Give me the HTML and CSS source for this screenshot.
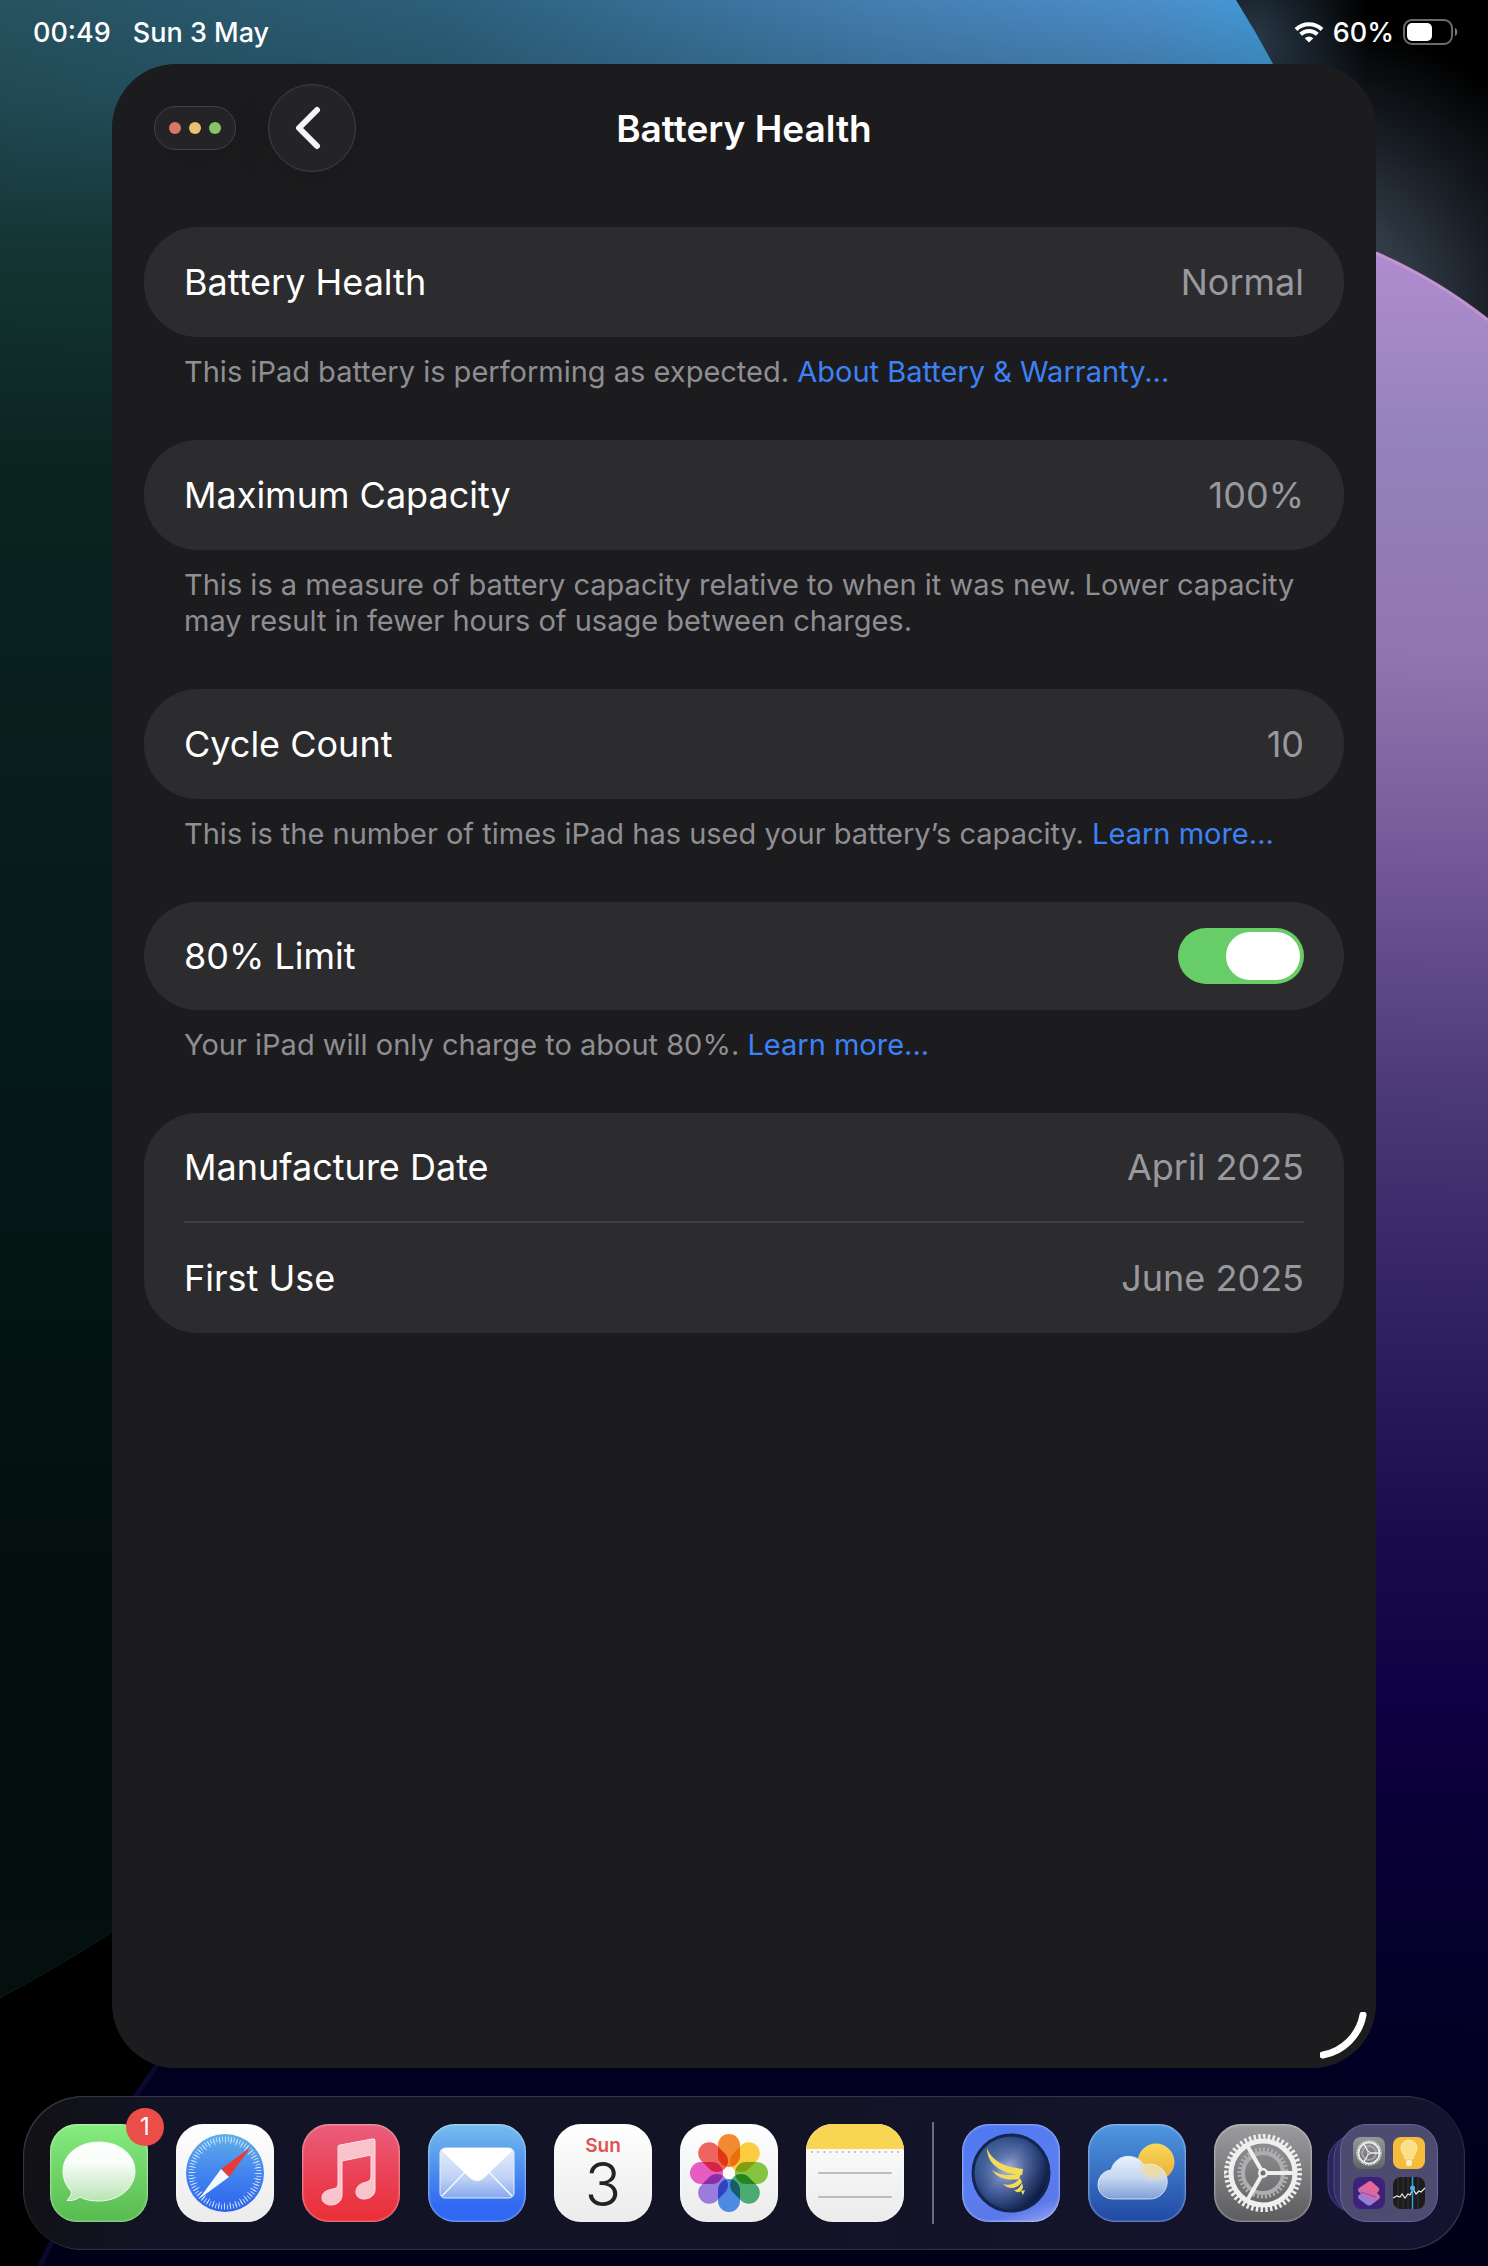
FILE: index.html
```
<!DOCTYPE html>
<html lang="en">
<head>
  <meta charset="UTF-8" />
  <meta name="viewport" content="width=device-width, initial-scale=1.0" />
  <title>Battery Health</title>
  <link rel="stylesheet" href="styles.css">
</head>
<body>
  <!-- Wallpaper -->
  <svg class="wallpaper" viewBox="0 0 1488 2266" preserveAspectRatio="none" aria-hidden="true">
    <defs>
      <linearGradient id="skyAcross" gradientUnits="userSpaceOnUse" x1="0" y1="0" x2="1270" y2="0">
        <stop offset="0" stop-color="#27525f" />
        <stop offset="0.35" stop-color="#2c5f7b" />
        <stop offset="0.7" stop-color="#447fb2" />
        <stop offset="0.9" stop-color="#4c8cc8" />
        <stop offset="1" stop-color="#439ad9" />
      </linearGradient>
      <linearGradient id="skyDown" x1="0" y1="0" x2="0" y2="1">
        <stop offset="0" stop-color="#123436" stop-opacity="0" />
        <stop offset="0.05" stop-color="#123436" stop-opacity="0.3" />
        <stop offset="0.12" stop-color="#12322f" stop-opacity="0.9" />
        <stop offset="0.23" stop-color="#0b2420" />
        <stop offset="0.5" stop-color="#051a19" />
        <stop offset="0.8" stop-color="#030f0e" />
        <stop offset="1" stop-color="#03100e" />
      </linearGradient>
      <radialGradient id="slateGlow" gradientUnits="userSpaceOnUse" cx="1300" cy="320" r="300">
        <stop offset="0" stop-color="#3c4654" />
        <stop offset="0.35" stop-color="#333d49" />
        <stop offset="0.65" stop-color="#191f26" />
        <stop offset="1" stop-color="#000000" />
      </radialGradient>
      <radialGradient id="topGlow" gradientUnits="userSpaceOnUse" cx="1250" cy="40" r="120">
        <stop offset="0" stop-color="#2a3a4a" />
        <stop offset="1" stop-color="#2a3a4a" stop-opacity="0" />
      </radialGradient>
      <linearGradient id="planet" gradientUnits="userSpaceOnUse" x1="1420" y1="250" x2="1400" y2="2266">
        <stop offset="0" stop-color="#b08ccf" />
        <stop offset="0.09" stop-color="#9583bd" />
        <stop offset="0.2" stop-color="#9175ae" />
        <stop offset="0.3" stop-color="#74599a" />
        <stop offset="0.42" stop-color="#4b3877" />
        <stop offset="0.53" stop-color="#302160" />
        <stop offset="0.64" stop-color="#1a0c4c" />
        <stop offset="0.72" stop-color="#0e0042" />
        <stop offset="0.82" stop-color="#070030" />
        <stop offset="0.92" stop-color="#01001f" />
        <stop offset="1" stop-color="#000016" />
      </linearGradient>
    </defs>
    <rect width="1488" height="2266" fill="#000" />
    <rect x="1000" width="488" height="700" fill="url(#slateGlow)" />
    <circle cx="1250" cy="40" r="120" fill="url(#topGlow)" />
    <path d="M0 0H1236Q1256 32 1273 64C1600 700 600 1680 112 1932Q60 1966 0 1998Z" fill="url(#skyAcross)" />
    <path d="M0 0H1236Q1256 32 1273 64C1600 700 600 1680 112 1932Q60 1966 0 1998Z" fill="url(#skyDown)" />
    <path d="M40 2266Q90 2160 158 2064C500 1500 900 300 1376 252Q1436 278 1488 319V2266Z" fill="url(#planet)" />
    <path d="M1376 253Q1436 279 1488 320" fill="none" stroke="#cb99d2" stroke-width="3" opacity="0.8" />
    <path d="M40 2266Q90 2160 158 2064" fill="none" stroke="#0c0830" stroke-width="5" />
  </svg>

  <div class="screen">
    <!-- Status bar -->
    <header class="statusBar">
      <div class="statusGroup dateGroup">
        <span>00:49</span>
        <span>Sun 3 May</span>
      </div>
      <div class="statusGroup">
        <svg width="30" height="22" viewBox="0 0 30 22" aria-label="Wi-Fi">
          <g fill="none" stroke="#fff" stroke-width="4">
            <path d="M2 8.500a19 19 0 0 1 26 0" />
            <path d="M6.600 13.200a12.400 12.400 0 0 1 16.800 0" />
          </g>
          <path d="M15 21.500l-4.300-4.300a6.200 6.200 0 0 1 8.600 0z" fill="#fff" />
        </svg>
        <span>60%</span>
        <svg width="56" height="26" viewBox="0 0 56 26" aria-label="Battery">
          <rect x="1" y="1" width="48" height="24" rx="8" fill="none" stroke="#6c6c70" stroke-width="2" />
          <rect x="4" y="4" width="25" height="18" rx="5" fill="#fff" />
          <path d="M52 9c3 1 3 7 0 8z" fill="#7c7c80" />
        </svg>
      </div>
    </header>

    <!-- Settings window -->
    <main class="window">
      <div class="titleBar">
        <div class="titleControls">
          <button class="trafficLights" aria-label="Window controls">
            <span class="light red"></span>
            <span class="light yellow"></span>
            <span class="light green"></span>
          </button>
          <button class="backButton" aria-label="Back">
            <svg width="26" height="44" viewBox="0 0 26 44">
              <path d="M22 4L4 22l18 18" fill="none" stroke="#f4f4f6" stroke-width="6" stroke-linecap="round" stroke-linejoin="round" />
            </svg>
          </button>
        </div>
        <h1>Battery Health</h1>
      </div>

      <div class="settings">
        <section>
          <div class="card">
            <div class="row"><span>Battery Health</span><span class="value">Normal</span></div>
          </div>
          <p class="note">This iPad battery is performing as expected. <a href="#">About Battery &amp; Warranty...</a></p>
        </section>

        <section>
          <div class="card">
            <div class="row"><span>Maximum Capacity</span><span class="value">100%</span></div>
          </div>
          <p class="note">This is a measure of battery capacity relative to when it was new. Lower capacity may result in fewer hours of usage between charges.</p>
        </section>

        <section>
          <div class="card">
            <div class="row"><span>Cycle Count</span><span class="value">10</span></div>
          </div>
          <p class="note">This is the number of times iPad has used your battery’s capacity. <a href="#">Learn more...</a></p>
        </section>

        <section>
          <div class="card">
            <div class="row toggleRow">
              <label for="limitToggle">80% Limit</label>
              <input type="checkbox" id="limitToggle" class="toggle" checked />
            </div>
          </div>
          <p class="note">Your iPad will only charge to about 80%. <a href="#">Learn more...</a></p>
        </section>

        <section>
          <div class="card">
            <div class="row"><span>Manufacture Date</span><span class="value">April 2025</span></div>
            <div class="row"><span>First Use</span><span class="value">June 2025</span></div>
          </div>
        </section>
      </div>

      <svg class="resizeHandle" width="48" height="48" viewBox="0 0 48 48" aria-hidden="true">
        <path d="M43 3A50 50 0 0 1 3 43" fill="none" stroke="#fff" stroke-width="7" stroke-linecap="round" />
      </svg>
    </main>

    <!-- Dock -->
    <nav class="dock" aria-label="Dock">
      <button class="app messages" aria-label="Messages">
        <svg viewBox="0 0 98 98">
          <defs>
            <linearGradient id="bubble" x1="0" y1="0" x2="0" y2="1">
              <stop offset="0" stop-color="#ffffff" />
              <stop offset="0.35" stop-color="#f8fdf8" />
              <stop offset="1" stop-color="#b9e3b5" />
            </linearGradient>
          </defs>
          <path d="M49 18C69 18 85 30 85 47S69 77 49 77C42 77 35 76 30 73C26 76 21 77 17 76.500C20 73 22 70 21 67C16 62 13 55 13 47C13 30 29 18 49 18Z" fill="url(#bubble)" stroke="#eefbec" stroke-width="1" />
        </svg>
        <span class="badge">1</span>
      </button>

      <button class="app safari" aria-label="Safari">
        <svg viewBox="0 0 98 98">
          <defs>
            <linearGradient id="compass" x1="0" y1="0" x2="0" y2="1">
              <stop offset="0" stop-color="#5fb0ea" />
              <stop offset="0.5" stop-color="#4485ee" />
              <stop offset="1" stop-color="#2c62ee" />
            </linearGradient>
          </defs>
          <circle cx="49" cy="49" r="39" fill="url(#compass)" />
          <circle cx="49" cy="49" r="34" fill="none" stroke="#cfe3fb" stroke-width="5" pathLength="72" stroke-dasharray="0.3 0.7" />
          <circle cx="49" cy="49" r="32.500" fill="none" stroke="#cfe3fb" stroke-width="6" pathLength="36" stroke-dasharray="0.150 0.850" />
          <path d="M75 23L53 53L45 45Z" fill="#e93b36" />
          <path d="M23 75L45 45L53 53Z" fill="#f4f8ff" />
        </svg>
      </button>

      <button class="app music" aria-label="Music">
        <svg viewBox="0 0 98 98">
          <path d="M36 23Q36 21 38 21L70 15Q73 14 73 17V66C73 71 68 75 62 75C57 75 54 72 54 68C54 62 59 59 65 58Q69 57 69 53V31L40 37V71C40 77 35 81 29 81C24 81 20 78 20 74C20 68 25 66 31 65Q36 64 36 60Z" fill="#f9c3cc" stroke="#fde0e4" stroke-width="1" />
        </svg>
      </button>

      <button class="app mail" aria-label="Mail">
        <svg viewBox="0 0 98 98">
          <defs>
            <linearGradient id="envelope" x1="0" y1="0" x2="0" y2="1">
              <stop offset="0" stop-color="#e4eefb" />
              <stop offset="0.6" stop-color="#c0d2f5" />
              <stop offset="1" stop-color="#86a8ee" />
            </linearGradient>
          </defs>
          <rect x="12" y="24" width="74" height="50" rx="5" fill="url(#envelope)" stroke="#e3eefc" stroke-width="1" />
          <path d="M14 72L38 47M84 72L60 47" stroke="#f4f8ff" stroke-width="1.500" />
          <path d="M14 27Q16 24 19 24H79Q82 24 84 27L57 53Q49 61 41 53Z" fill="#fff" />
        </svg>
      </button>

      <button class="app calendar" aria-label="Calendar">
        <span class="calendarDay">Sun</span>
        <span class="calendarDate">3</span>
      </button>

      <button class="app photos" aria-label="Photos">
        <svg viewBox="0 0 98 98">
          <g class="petals">
            <rect x="38" y="10" width="22" height="33" rx="11" fill="#f28a32" />
            <rect x="38" y="10" width="22" height="33" rx="11" fill="#f9cd3f" transform="rotate(45 49 49)" />
            <rect x="38" y="10" width="22" height="33" rx="11" fill="#84c440" transform="rotate(90 49 49)" />
            <rect x="38" y="10" width="22" height="33" rx="11" fill="#4aab74" transform="rotate(135 49 49)" />
            <rect x="38" y="10" width="22" height="33" rx="11" fill="#4e8ae4" transform="rotate(180 49 49)" />
            <rect x="38" y="10" width="22" height="33" rx="11" fill="#9a7cdc" transform="rotate(225 49 49)" />
            <rect x="38" y="10" width="22" height="33" rx="11" fill="#e65cc0" transform="rotate(270 49 49)" />
            <rect x="38" y="10" width="22" height="33" rx="11" fill="#ee6460" transform="rotate(315 49 49)" />
          </g>
          <circle cx="49" cy="49" r="6" fill="#fdfaf8" />
        </svg>
      </button>

      <button class="app notes" aria-label="Notes">
        <svg viewBox="0 0 98 98">
          <rect width="98" height="25" fill="#f8d653" />
          <path d="M6 28H94" stroke="#b5b5b5" stroke-width="2" stroke-linecap="round" stroke-dasharray="0 6.140" />
          <path d="M13 49H85M13 73H85" stroke="#bdbdbd" stroke-width="2" stroke-linecap="round" />
        </svg>
      </button>

      <span class="divider"></span>

      <button class="app pegasus" aria-label="Pegasus">
        <svg viewBox="0 0 98 98">
          <defs>
            <radialGradient id="globe" cx="0.480" cy="0.480" r="0.550">
              <stop offset="0" stop-color="#b4c1e2" />
              <stop offset="0.35" stop-color="#6a7fb6" />
              <stop offset="0.75" stop-color="#34508c" />
              <stop offset="1" stop-color="#14285a" />
            </radialGradient>
            <linearGradient id="globeShade" x1="0" y1="0" x2="1" y2="0.700">
              <stop offset="0" stop-color="#5b9bc4" stop-opacity="0.5" />
              <stop offset="0.5" stop-color="#20386e" stop-opacity="0" />
              <stop offset="1" stop-color="#050b28" stop-opacity="0.8" />
            </linearGradient>
          </defs>
          <circle cx="49" cy="49" r="39" fill="url(#globe)" />
          <circle cx="49" cy="49" r="38" fill="url(#globeShade)" stroke="#14264f" stroke-width="3" />
          <g fill="#f3dc5c">
            <path d="M25 24C30 38 44 43 61 45L60 51C42 50 25 42 25 24Z" />
            <path d="M30 46C38 52 48 52 59 49L57 55C45 57 35 54 30 46Z" />
            <path d="M41 60C47 62 53 60 58 54L60 58C55 65 47 66 41 60Z" />
            <path d="M52 66C56 66 58 63 60 59L61 63C60 68 56 70 52 66Z" />
            <path d="M61 71L59 67L63 66Z" />
          </g>
        </svg>
      </button>

      <button class="app weather" aria-label="Weather">
        <svg viewBox="0 0 98 98">
          <defs>
            <linearGradient id="cloud" x1="0" y1="0" x2="0" y2="1">
              <stop offset="0" stop-color="#e9f1fc" />
              <stop offset="0.5" stop-color="#c6d7f0" />
              <stop offset="1" stop-color="#7ea0d6" />
            </linearGradient>
            <radialGradient id="sunThroughCloud" gradientUnits="userSpaceOnUse" cx="66" cy="42" r="18">
              <stop offset="0" stop-color="#f7dc86" />
              <stop offset="0.6" stop-color="#efdca8" stop-opacity="0.7" />
              <stop offset="1" stop-color="#d5dff0" stop-opacity="0" />
            </radialGradient>
            <linearGradient id="sun" x1="0" y1="0" x2="0" y2="1">
              <stop offset="0" stop-color="#f9d95c" />
              <stop offset="1" stop-color="#e9ac33" />
            </linearGradient>
          </defs>
          <circle cx="68" cy="38" r="18.500" fill="url(#sun)" />
          <path d="M26 75A14.500 14.500 0 0 1 23 46A18 18 0 0 1 56 41A17.500 17.500 0 1 1 61 75Z" fill="url(#cloud)" />
          <path d="M26 75A14.500 14.500 0 0 1 23 46A18 18 0 0 1 56 41A17.500 17.500 0 1 1 61 75Z" fill="url(#sunThroughCloud)" stroke="#e3edfa" stroke-width="1" stroke-opacity="0.8" />
        </svg>
      </button>

      <button class="app gear" aria-label="Settings">
        <svg viewBox="0 0 98 98">
          <defs>
            <symbol id="gearShape" viewBox="0 0 98 98">
              <g fill="none" stroke="#aeaeb1">
                <circle cx="49" cy="49" r="23.500" stroke-width="4" pathLength="36" stroke-dasharray="0.500 0.500" />
                <circle cx="49" cy="49" r="20" stroke-width="4" />
              </g>
              <g fill="none" stroke="#efeff0">
                <circle cx="49" cy="49" r="36.500" stroke-width="5" pathLength="48" stroke-dasharray="0.520 0.480" />
                <circle cx="49" cy="49" r="32" stroke-width="5" />
                <path d="M49 49H80M49 49L33.500 22M49 49L33.500 76" stroke-width="4" />
              </g>
              <circle cx="49" cy="49" r="5" fill="#efeff0" />
              <circle cx="49" cy="49" r="2.500" fill="#6e6e71" />
            </symbol>
          </defs>
          <use href="#gearShape" width="98" height="98" />
        </svg>
      </button>

      <button class="app library" aria-label="App Library">
        <svg viewBox="0 0 98 98">
          <defs>
            <linearGradient id="tileGrey" x1="0" y1="0" x2="0" y2="1">
              <stop offset="0" stop-color="#98989b" />
              <stop offset="1" stop-color="#636366" />
            </linearGradient>
            <linearGradient id="shortcut" x1="0.700" y1="0" x2="0.300" y2="1">
              <stop offset="0" stop-color="#f0688c" />
              <stop offset="0.5" stop-color="#d768a8" />
              <stop offset="1" stop-color="#6a8cf0" />
            </linearGradient>
          </defs>
          <rect x="-12" y="12" width="70" height="76" rx="26" fill="#2a2756" stroke="#433d88" stroke-width="1" />
          <rect x="-6" y="6" width="74" height="86" rx="28" fill="#353262" stroke="#4d4799" stroke-width="1" />
          <rect x="0.500" y="0.500" width="97" height="97" rx="26" fill="#4e4b70" stroke="#6a63a6" stroke-width="1" />
          <rect x="13" y="13" width="32" height="32" rx="8" fill="url(#tileGrey)" />
          <use href="#gearShape" x="13" y="13" width="32" height="32" />
          <rect x="53" y="13" width="32" height="32" rx="8" fill="#f6bd3c" />
          <path d="M65 35C65 31 61 29 61 24A8 8 0 0 1 77 24C77 29 73 31 73 35Z" fill="#fae089" stroke="#fdeeb8" stroke-width="0.800" />
          <rect x="66" y="36" width="6" height="6" rx="2" fill="#fdf0c4" />
          <rect x="13" y="53" width="32" height="32" rx="8" fill="#3c2379" />
          <path d="M28 58Q30 56 32 58L39 64Q40 66 38 68L37 69L39 71Q41 73 39 75L31 81Q29 82 27 81L19 75Q17 73 19 71L21 70L19 68Q17 66 19 64Z" fill="url(#shortcut)" />
          <path d="M21 68L36 73" stroke="#8a4fa8" stroke-width="1" />
          <rect x="53" y="53" width="32" height="32" rx="8" fill="#1c1c1e" />
          <path d="M58 53V85M63 53V85M68 53V85M78 53V85" stroke="#343437" stroke-width="1" />
          <path d="M53 74L57 72L60 73L62 70L65 74L68 70L70 71L73 65L76 70L79 67L81 68L85 64" fill="none" stroke="#e8e8ea" stroke-width="1.200" />
          <path d="M72.500 53V85" stroke="#2f9fe0" stroke-width="1.500" />
          <circle cx="72.500" cy="64" r="2.500" fill="#45b2f0" />
        </svg>
      </button>
    </nav>
  </div>
</body>
</html>
```

FILE: styles.css
```
* {
  box-sizing: border-box;
}

body {
  margin: 0;
  position: relative;
  font-family: Inter, "Liberation Sans", sans-serif;
  color: #fff;
  background-color: #000;
}

button {
  padding: 0;
  border: none;
  background: none;
  font-family: inherit;
  color: inherit;
  cursor: pointer;
}

svg {
  display: block;
}

.wallpaper {
  position: absolute;
  top: 0;
  left: 0;
  width: 100%;
  height: 100%;
}

.screen {
  position: relative;
  display: flex;
  flex-direction: column;
  min-height: 100vh;
}

/* Status bar */
.statusBar {
  display: flex;
  justify-content: space-between;
  align-items: center;
  height: 64px;
  padding: 0 29px 0 33px;
  font-size: 27px;
  font-weight: 500;
}

.statusGroup {
  display: flex;
  align-items: center;
  gap: 9px;
}

.dateGroup {
  gap: 22px;
}

/* Window */
.window {
  position: relative;
  flex: 1;
  margin: 0 112px;
  padding: 0 32px 60px;
  border-radius: 64px;
  background-color: #1c1c1e;
}

.titleBar {
  display: grid;
  grid-template-columns: 1fr auto 1fr;
  align-items: center;
  height: 128px;
  padding: 0 10px;
}

.titleBar h1 {
  margin: 0;
  font-size: 37px;
  font-weight: 600;
}

.titleControls {
  display: flex;
  align-items: center;
  gap: 32px;
}

.trafficLights,
.backButton {
  display: flex;
  align-items: center;
  justify-content: center;
  background-color: #242427;
  border: 1px solid #424246;
  box-shadow: 0 8px 40px rgba(0, 0, 0, 0.12);
}

.trafficLights {
  gap: 8px;
  width: 82px;
  height: 44px;
  border-radius: 22px;
}

.backButton {
  width: 88px;
  height: 88px;
  padding-right: 8px;
  border-radius: 50%;
}

.light {
  width: 12px;
  height: 12px;
  border-radius: 50%;
}

.red {
  background-color: #d6776b;
}

.yellow {
  background-color: #e8c16c;
}

.green {
  background-color: #89c26c;
}

/* Settings list */
.settings {
  display: flex;
  flex-direction: column;
  gap: 50px;
  padding-top: 35px;
}

.card {
  padding: 0 40px;
  border-radius: 54px;
  background-color: #2c2c2e;
}

.row {
  display: flex;
  justify-content: space-between;
  align-items: center;
  height: 110px;
  font-size: 36px;
}

.row:not(:last-child) {
  border-bottom: 2px solid #3f3f42;
}

.toggleRow {
  height: 108px;
}

.value {
  color: #98989f;
}

.note {
  margin: 0;
  padding: 17px 40px 0;
  font-size: 29px;
  line-height: 36px;
  color: #8e8e93;
}

.note a {
  color: #3c82f6;
  text-decoration: none;
}

.toggle {
  appearance: none;
  display: flex;
  justify-content: flex-start;
  width: 126px;
  height: 56px;
  margin: 0;
  padding: 4px;
  border-radius: 28px;
  background-color: #48484a;
  cursor: pointer;
}

.toggle::before {
  content: "";
  width: 74px;
  height: 48px;
  border-radius: 24px;
  background-color: #fff;
}

.toggle:checked {
  justify-content: flex-end;
  background-color: #67ce67;
}

.resizeHandle {
  position: absolute;
  right: 8px;
  bottom: 8px;
}

/* Dock */
.dock {
  display: flex;
  justify-content: space-between;
  align-items: center;
  height: 154px;
  margin: 28px 23px 16px;
  padding: 0 27px;
  border-radius: 60px;
  background: linear-gradient(100deg, #111116 2%, #121425 10%, #121425 50%, #15122f 100%);
  box-shadow: inset 1px 1px 1px #3a3a48, inset -1px -1px 1px #34324f;
}

.app {
  position: relative;
  flex: none;
  width: 98px;
  height: 98px;
  border-radius: 27px;
  box-shadow: inset 0 0 2px 1px rgba(255, 255, 255, 0.4);
}

.messages {
  background: linear-gradient(#86ec80, #58bb50);
}

.safari,
.calendar,
.photos,
.notes {
  background: linear-gradient(#fff, #ebebeb);
}

.music {
  background: linear-gradient(#ea5f7d, #ea4257 50%, #ea2e36);
}

.mail {
  background: linear-gradient(#76beee, #4a8aee 50%, #3068f2 85%);
}

.calendar {
  display: flex;
  flex-direction: column;
  align-items: center;
}

.calendarDay {
  padding-top: 11px;
  font-size: 19px;
  line-height: 22px;
  font-weight: 600;
  color: #e0524f;
}

.calendarDate {
  font-size: 60px;
  line-height: 54px;
  font-weight: 300;
  color: #232323;
}

.petals rect {
  mix-blend-mode: multiply;
}

.photos svg {
  isolation: isolate;
}

.notes svg {
  border-radius: 27px;
}

.pegasus {
  background: linear-gradient(160deg, #4d76f0, #5a7ff0 50%, #5a78ea 80%, #9aa8f4);
}

.weather {
  background: linear-gradient(#4f97e0, #2149a4);
}

.gear {
  background: linear-gradient(#9c9c9f, #5c5c5f);
}

.library {
  box-shadow: none;
}

.library svg {
  overflow: visible;
}

.divider {
  width: 2px;
  height: 102px;
  background-color: #6c6c7a;
}

.badge {
  position: absolute;
  top: -16px;
  right: -16px;
  width: 38px;
  height: 38px;
  border-radius: 50%;
  background-color: #eb4e48;
  font-size: 24px;
  line-height: 38px;
  text-align: center;
}
```
